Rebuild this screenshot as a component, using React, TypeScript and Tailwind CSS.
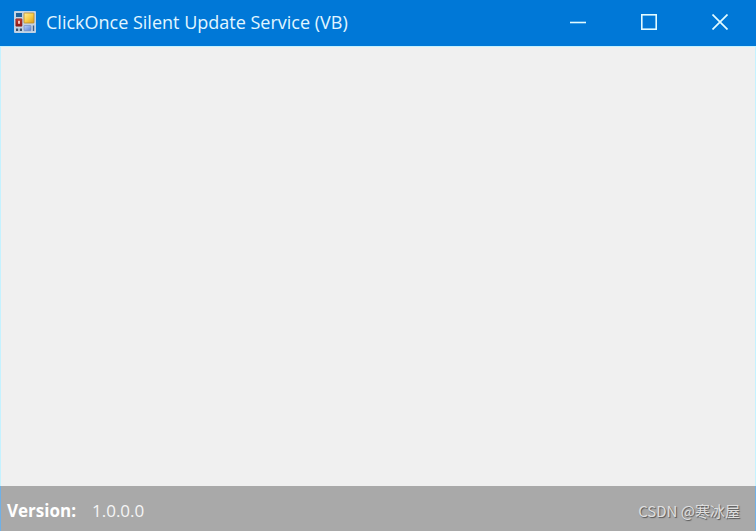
import React from "react";

function AppIcon() {
  return (
    <svg width="22" height="22" viewBox="0 0 22 22" aria-hidden="true">
      <defs>
        <linearGradient id="gold" x1="0" y1="0" x2="1" y2="1">
          <stop offset="0" stopColor="#fff0a0" />
          <stop offset="0.5" stopColor="#f8cf4a" />
          <stop offset="1" stopColor="#d99a1c" />
        </linearGradient>
        <linearGradient id="red" x1="0" y1="0" x2="0" y2="1">
          <stop offset="0" stopColor="#c0392f" />
          <stop offset="1" stopColor="#8c1713" />
        </linearGradient>
        <linearGradient id="blue" x1="0" y1="0" x2="1" y2="1">
          <stop offset="0" stopColor="#b9d0f8" />
          <stop offset="1" stopColor="#5b83d6" />
        </linearGradient>
      </defs>
      <rect width="22" height="22" rx="1" fill="#c3d3e4" />
      <rect x="2" y="2" width="6" height="4" fill="#1f6099" />
      <rect x="1.8" y="7.8" width="6.2" height="7.4" rx="0.5" fill="url(#red)" stroke="#8a2a2a" strokeWidth="0.6" />
      <rect x="4" y="9.8" width="2" height="3" fill="#f3c4bc" />
      <rect x="10" y="2" width="10" height="10" rx="0.5" fill="url(#gold)" stroke="#b98a2c" strokeWidth="0.8" />
      <rect x="2" y="17.5" width="2.2" height="2.5" fill="#3a5068" />
      <rect x="5.8" y="17.5" width="2.2" height="2.5" fill="#3a5068" />
      <rect x="10" y="14.5" width="7" height="5.2" rx="0.5" fill="url(#blue)" stroke="#6b84bb" strokeWidth="0.6" />
      <rect x="18.8" y="14.5" width="1.4" height="5.5" fill="#3d5f8a" />
    </svg>
  );
}

const captionButton = "flex h-full w-[71px] items-center justify-center text-[#e2fbff]";

function TitleBar() {
  return (
    <header className="flex h-[46px] shrink-0 items-center bg-[#0078d7] pb-0.5 pl-3.5 pr-px">
      <AppIcon />
      <h1 className="ml-2.5 flex-1 truncate text-[18px] leading-6 text-[#e2f6ff]">
        ClickOnce Silent Update Service (VB)
      </h1>
      <div className="flex h-full">
        <button type="button" aria-label="Minimize" className={captionButton}>
          <svg width="16" height="16" viewBox="0 0 16 16" fill="none" stroke="currentColor" strokeWidth="1.6">
            <path d="M0 8.5H16" />
          </svg>
        </button>
        <button type="button" aria-label="Maximize" className={captionButton}>
          <svg width="16" height="16" viewBox="0 0 16 16" fill="none" stroke="currentColor" strokeWidth="1.6">
            <rect x="0.8" y="0.8" width="14.4" height="14.4" />
          </svg>
        </button>
        <button type="button" aria-label="Close" className={captionButton}>
          <svg width="16" height="16" viewBox="0 0 16 16" fill="none" stroke="currentColor" strokeWidth="1.7">
            <path d="M0.5 0.5L15.5 15.5M15.5 0.5L0.5 15.5" />
          </svg>
        </button>
      </div>
    </header>
  );
}

export default function App() {
  return (
    <div className="flex min-h-screen flex-col bg-[#f0f0f0] font-['Open_Sans','Noto_Sans_CJK_SC',sans-serif]">
      <TitleBar />
      <main className="flex-1 border-x border-t border-[#c5f2ff] bg-[#f0f0f0]" />
      <footer className="flex h-[45px] shrink-0 items-center border-x border-x-[#6fb0e6] bg-[#a9a9a9] pl-1.5 pr-[15px] pt-1 text-[17px] leading-6 text-white">
        <span className="font-bold">Version:</span>
        <span className="ml-4 text-[#f5f5f5]">1.0.0.0</span>
        <span className="ml-auto font-['Noto_Sans_CJK_SC',sans-serif] text-[15px] text-[#dedede] [text-shadow:1px_1px_1px_#555]">
          CSDN @寒冰屋
        </span>
      </footer>
    </div>
  );
}
